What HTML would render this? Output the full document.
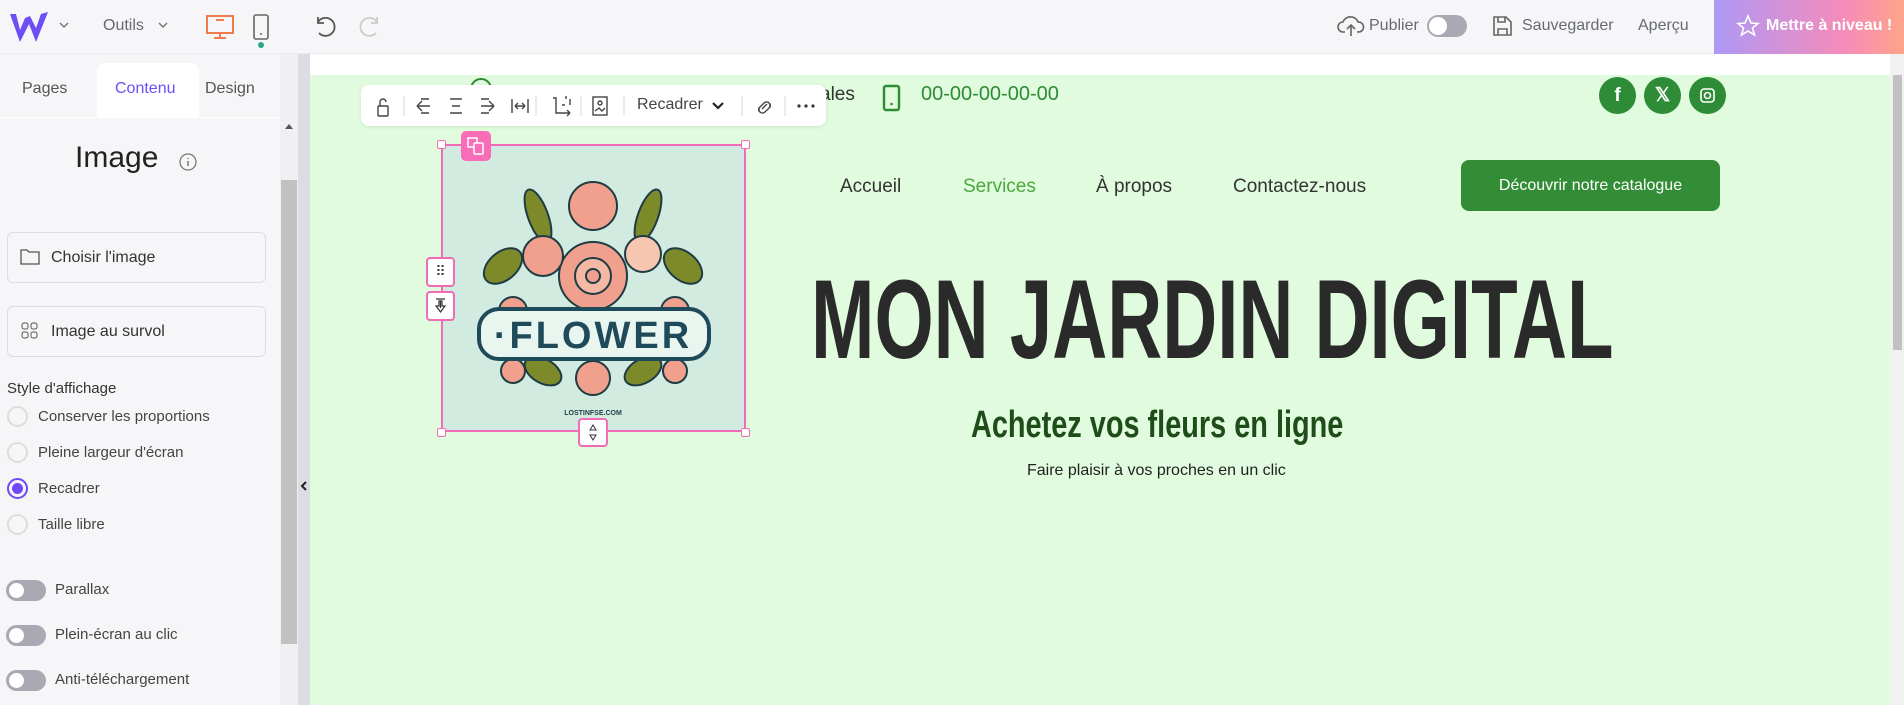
<!DOCTYPE html>
<html><head><meta charset="utf-8"><style>
*{box-sizing:border-box;margin:0;padding:0}
body{width:1904px;height:705px;overflow:hidden;font-family:"Liberation Sans",sans-serif;background:#f6f6f8;position:relative;color:#333}
.a{position:absolute}
.top{left:0;top:0;width:1904px;height:54px;background:#f6f6f8;border-bottom:1px solid #ececf0}
.t{font-size:16px;color:#666a73}
.panel{left:0;top:54px;width:280px;height:651px;background:#f6f6f8}
.btn{left:7px;width:259px;height:51px;border:1px solid #dcdce2;border-radius:6px;font-size:16px;color:#333;padding-left:43px;line-height:49px}
.radio{left:7px;width:21px;height:21px;border-radius:50%;border:2px solid #ddd;background:#f6f6f8}
.rl{left:38px;font-size:15px;color:#444}
.tg{left:6px;width:40px;height:21px;border-radius:11px;background:#a9a8b3}
.tg:after{content:"";position:absolute;left:3px;top:3px;width:15px;height:15px;border-radius:50%;background:#fff}
.tl{left:55px;font-size:15px;color:#444}
.nav{font-size:19px;color:#333;top:175px}
</style></head><body>
<div class="a top"></div>
<svg class="a" style="left:8px;top:10px" width="42" height="34" viewBox="0 0 42 34"><path d="M2 4 L12 32 L21 14 L28 32 L40 2 L33 4 L28 18 L22 6 L17 8 L12 20 L8 4Z" fill="#6c4df6"/></svg>
<svg class="a" style="left:58px;top:20px" width="12" height="10"><path d="M2 3l4 4 4-4" stroke="#777" fill="none" stroke-width="1.5"/></svg>
<div class="a t" style="left:103px;top:17px">Outils</div>
<svg class="a" style="left:157px;top:20px" width="12" height="10"><path d="M2 3l4 4 4-4" stroke="#777" fill="none" stroke-width="1.5"/></svg>
<svg class="a" style="left:205px;top:14px" width="30" height="26"><rect x="2" y="2" width="26" height="17" fill="none" stroke="#f07c4b" stroke-width="2"/><path d="M11 6h8M15 19v5M9 24h12" stroke="#f07c4b" stroke-width="2"/></svg>
<svg class="a" style="left:252px;top:13px" width="18" height="28"><rect x="2" y="2" width="14" height="24" rx="2" fill="none" stroke="#666" stroke-width="1.6"/><circle cx="9" cy="21" r="1" fill="#666"/></svg>
<div class="a" style="left:258px;top:42px;width:6px;height:6px;border-radius:50%;background:#2aa58a"></div>
<svg class="a" style="left:312px;top:14px" width="26" height="26"><path d="M6 8a9 9 0 1 1 1 11" stroke="#555" fill="none" stroke-width="1.8"/><path d="M6 3v6h6" stroke="#555" fill="none" stroke-width="1.8"/></svg>
<svg class="a" style="left:357px;top:14px" width="26" height="26"><path d="M20 8a9 9 0 1 0 -1 11" stroke="#ccc" fill="none" stroke-width="1.8"/><path d="M20 3v6h-6" stroke="#ccc" fill="none" stroke-width="1.8"/></svg>
<svg class="a" style="left:1337px;top:14px" width="28" height="24"><path d="M8 18H6a5 5 0 0 1 0-10 8 8 0 0 1 15 0 5 5 0 0 1 1 10h-2M14 22V11M10 15l4-4 4 4" stroke="#666" fill="none" stroke-width="1.6"/></svg>
<div class="a t" style="left:1369px;top:17px">Publier</div>
<div class="a" style="left:1427px;top:15px;width:40px;height:22px;border-radius:11px;background:#a9a8b3"><div class="a" style="left:2px;top:2px;width:18px;height:18px;border-radius:50%;background:#fff"></div></div>
<svg class="a" style="left:1491px;top:14px" width="22" height="24"><path d="M3 3h12l5 5v13H3Z" stroke="#666" fill="none" stroke-width="1.6"/><path d="M7 3v5h7V3M7 21v-6h9v6" stroke="#666" fill="none" stroke-width="1.6"/></svg>
<div class="a t" style="left:1522px;top:17px">Sauvegarder</div>
<div class="a t" style="left:1638px;top:17px">Aperçu</div>
<div class="a" style="left:1714px;top:0;width:190px;height:54px;background:linear-gradient(90deg,#ad98f6,#f68cb8 70%,#fea488)"></div>
<svg class="a" style="left:1736px;top:14px" width="24" height="24"><path d="M12 2l3 7 7 .5-5.5 4.5 2 7L12 17l-6.5 4 2-7L2 9.5 9 9Z" stroke="#fff" fill="none" stroke-width="1.6"/></svg>
<div class="a" style="left:1766px;top:17px;font-size:16px;font-weight:bold;color:#fff">Mettre à niveau !</div>

<div class="a panel"></div>
<div class="a" style="left:97px;top:63px;width:102px;height:55px;background:#fff;border-radius:8px 8px 0 0"></div>
<div class="a t" style="left:22px;top:80px;font-size:16px;color:#555">Pages</div>
<div class="a" style="left:115px;top:80px;font-size:16px;color:#6c4df6">Contenu</div>
<div class="a t" style="left:205px;top:80px;font-size:16px;color:#555">Design</div>
<div class="a" style="left:0;top:117px;width:280px;height:1px;background:#fff"></div>
<div class="a" style="left:75px;top:141px;font-size:30px;color:#222">Image</div>
<svg class="a" style="left:177px;top:151px" width="22" height="22"><circle cx="11" cy="11" r="8" stroke="#777" fill="none" stroke-width="1.3"/><path d="M11 10v5M11 7v1" stroke="#777" stroke-width="1.5"/></svg>
<div class="a btn" style="top:232px">Choisir l'image</div>
<svg class="a" style="left:20px;top:248px" width="20" height="18"><path d="M1 2h6l2 2h10v12H1Z" stroke="#555" fill="none" stroke-width="1.3"/></svg>
<div class="a btn" style="top:306px">Image au survol</div>
<svg class="a" style="left:21px;top:322px" width="18" height="18"><rect x="1" y="1" width="6" height="6" rx="2" stroke="#555" fill="none"/><rect x="10" y="1" width="6" height="6" rx="2" stroke="#555" fill="none"/><rect x="1" y="10" width="6" height="6" rx="2" stroke="#555" fill="none"/><rect x="10" y="10" width="6" height="6" rx="2" stroke="#555" fill="none"/></svg>
<div class="a" style="left:7px;top:380px;font-size:15px;color:#333">Style d'affichage</div>
<div class="a radio" style="top:406px"></div><div class="a rl" style="top:408px">Conserver les proportions</div>
<div class="a radio" style="top:442px"></div><div class="a rl" style="top:444px">Pleine largeur d'écran</div>
<div class="a radio" style="top:478px;border-color:#7048f5;border-width:2px"><div class="a" style="left:3px;top:3px;width:11px;height:11px;border-radius:50%;background:#7048f5"></div></div><div class="a rl" style="top:480px">Recadrer</div>
<div class="a radio" style="top:514px"></div><div class="a rl" style="top:516px">Taille libre</div>
<div class="a tg" style="top:580px"></div><div class="a tl" style="top:581px">Parallax</div>
<div class="a tg" style="top:625px"></div><div class="a tl" style="top:626px">Plein-écran au clic</div>
<div class="a tg" style="top:670px"></div><div class="a tl" style="top:671px">Anti-téléchargement</div>
<div class="a" style="left:280px;top:54px;width:18px;height:651px;background:#f0f0f2"></div>
<div class="a" style="left:281px;top:180px;width:16px;height:464px;background:#c1c1c1"></div>
<svg class="a" style="left:284px;top:122px" width="10" height="8"><path d="M1 7l4-5 4 5Z" fill="#555"/></svg>
<div class="a" style="left:298px;top:54px;width:12px;height:651px;background:#dcdce2"></div>
<svg class="a" style="left:300px;top:480px" width="8" height="12"><path d="M6 2L2 6l4 4" stroke="#222" fill="none" stroke-width="2"/></svg>

<div class="a" style="left:310px;top:54px;width:1594px;height:21px;background:#fff"></div>
<div class="a" style="left:310px;top:75px;width:1580px;height:630px;background:#e0fbdd"></div>
<div class="a" style="left:1890px;top:54px;width:14px;height:651px;background:#f1f1f1"></div>
<div class="a" style="left:1893px;top:75px;width:9px;height:275px;background:#c1c1c1"></div>

<div class="a" style="left:470px;top:78px;width:22px;height:22px;border-radius:50%;border:2px solid #2e8b36"></div>
<div class="a" style="left:820px;top:84px;font-size:19px;color:#333">ales</div>
<svg class="a" style="left:882px;top:84px" width="20" height="28"><rect x="2" y="2" width="15" height="24" rx="2" stroke="#2e8b36" fill="none" stroke-width="2.4"/><circle cx="9.5" cy="20" r="1.3" fill="#2e8b36"/></svg>
<div class="a" style="left:921px;top:83px;font-size:20px;color:#2e8b36">00-00-00-00-00</div>
<div class="a" style="left:1599px;top:77px;width:37px;height:37px;border-radius:50%;background:#2e8b36;color:#fff;font-weight:bold;font-size:19px;text-align:center;line-height:37px">f</div>
<div class="a" style="left:1644px;top:77px;width:37px;height:37px;border-radius:50%;background:#2e8b36;color:#fff;font-weight:bold;font-size:19px;text-align:center;line-height:37px">𝕏</div>
<div class="a" style="left:1689px;top:77px;width:37px;height:37px;border-radius:50%;background:#2e8b36"><svg width="37" height="37"><rect x="12" y="12" width="13" height="13" rx="3" stroke="#fff" fill="none" stroke-width="1.6"/><circle cx="18.5" cy="18.5" r="3" stroke="#fff" fill="none" stroke-width="1.6"/></svg></div>

<div class="a nav" style="left:840px;top:176px">Accueil</div>
<div class="a nav" style="left:963px;top:176px;color:#4aa83c">Services</div>
<div class="a nav" style="left:1096px;top:176px">À propos</div>
<div class="a nav" style="left:1233px;top:176px">Contactez-nous</div>
<div class="a" style="left:1461px;top:160px;width:259px;height:51px;background:#338d37;border-radius:8px;color:#fff;font-size:16px;text-align:center;line-height:51px">Découvrir notre catalogue</div>

<div class="a" style="left:811px;top:265px;font-weight:bold;font-size:112px;line-height:110px;color:#2a2a2a;white-space:nowrap;transform:scaleX(0.68);transform-origin:left">MON JARDIN DIGITAL</div>
<div class="a" style="left:971px;top:404px;font-weight:bold;font-size:38px;color:#1f4d1a;white-space:nowrap;transform:scaleX(0.76);transform-origin:left">Achetez vos fleurs en ligne</div>
<div class="a" style="left:1027px;top:462px;font-size:16px;color:#222">Faire plaisir à vos proches en un clic</div>

<!-- image -->
<div class="a" style="left:441px;top:144px;width:305px;height:288px;background:#d2ebe0;border:2px solid #f06cb7">
<svg width="301" height="284" viewBox="0 0 301 284">
<g stroke="#1f3b44" stroke-width="2">
<ellipse cx="60" cy="120" rx="22" ry="14" fill="#7d8a2a" transform="rotate(-40 60 120)"/>
<ellipse cx="240" cy="120" rx="22" ry="14" fill="#7d8a2a" transform="rotate(40 240 120)"/>
<ellipse cx="95" cy="70" rx="10" ry="28" fill="#7d8a2a" transform="rotate(-20 95 70)"/>
<ellipse cx="205" cy="70" rx="10" ry="28" fill="#7d8a2a" transform="rotate(20 205 70)"/>
<circle cx="150" cy="60" r="24" fill="#f0a08c"/>
<circle cx="150" cy="130" r="34" fill="#f0a08c"/><circle cx="150" cy="130" r="18" fill="#f5b8a5"/><circle cx="150" cy="130" r="7" fill="#f0a08c"/>
<circle cx="100" cy="110" r="20" fill="#f0a08c"/><circle cx="200" cy="108" r="18" fill="#f7c6b0"/>
<circle cx="70" cy="165" r="14" fill="#f0a08c"/><circle cx="232" cy="165" r="14" fill="#f0a08c"/>
<ellipse cx="100" cy="225" rx="20" ry="12" fill="#7d8a2a" transform="rotate(30 100 225)"/>
<ellipse cx="200" cy="225" rx="20" ry="12" fill="#7d8a2a" transform="rotate(-30 200 225)"/>
<circle cx="150" cy="232" r="17" fill="#f0a08c"/>
<circle cx="70" cy="225" r="12" fill="#f0a08c"/><circle cx="232" cy="225" r="12" fill="#f0a08c"/>
</g>
<rect x="36" y="163" width="230" height="50" rx="20" fill="#e9f5ef" stroke="#1f4a5a" stroke-width="4"/>
<text x="150" y="202" text-anchor="middle" font-family="Liberation Sans" font-weight="bold" font-size="38" fill="#1f4a5a" letter-spacing="3">·FLOWER</text>
<text x="150" y="269" text-anchor="middle" font-family="Liberation Sans" font-weight="bold" font-size="7" fill="#1f3b44">LOSTINFSE.COM</text>
</svg></div>
<div class="a" style="left:437px;top:140px;width:9px;height:9px;background:#fff;border:1.5px solid #f06cb7;border-radius:2px"></div>
<div class="a" style="left:741px;top:140px;width:9px;height:9px;background:#fff;border:1.5px solid #f06cb7;border-radius:2px"></div>
<div class="a" style="left:437px;top:428px;width:9px;height:9px;background:#fff;border:1.5px solid #f06cb7;border-radius:2px"></div>
<div class="a" style="left:741px;top:428px;width:9px;height:9px;background:#fff;border:1.5px solid #f06cb7;border-radius:2px"></div>
<div class="a" style="left:461px;top:131px;width:30px;height:30px;background:#f86cb8;border-radius:5px"><svg width="30" height="30"><rect x="7" y="7" width="9" height="9" fill="none" stroke="#fff" stroke-width="1.5"/><rect x="13" y="12" width="9" height="11" rx="1" fill="#f86cb8" stroke="#fff" stroke-width="1.5"/></svg></div>
<div class="a" style="left:426px;top:257px;width:29px;height:30px;background:#fff;border:2px solid #f06cb7;border-radius:4px;font-size:14px;text-align:center;line-height:24px;color:#333">⠿</div>
<div class="a" style="left:426px;top:291px;width:29px;height:30px;background:#fff;border:2px solid #f06cb7;border-radius:4px"><svg width="25" height="26"><path d="M8 6h9M12.5 8v7M8 13h3V8h3v5h3l-4.5 6Z" stroke="#333" fill="none" stroke-width="1.2"/></svg></div>
<div class="a" style="left:578px;top:418px;width:30px;height:29px;background:#fff;border:2px solid #f06cb7;border-radius:4px"><svg width="26" height="25"><path d="M13 5l3 5h-6ZM13 20l3-5h-6Z" stroke="#333" fill="none" stroke-width="1"/></svg></div>

<!-- toolbar -->
<div class="a" style="left:361px;top:85px;width:465px;height:41px;background:#fff;border-radius:8px;box-shadow:0 1px 4px rgba(0,0,0,.08)"></div>
<svg class="a" style="left:361px;top:85px" width="465" height="41" stroke="#444" fill="none" stroke-width="1.4">
<rect x="17" y="21" width="10" height="10" rx="1"/><path d="M19 21v-4a3 3 0 0 1 6 0"/>
<path d="M43 11v20M175 11v20M220 11v20M263 11v20M381 11v20M424 11v20" stroke="#e4e4e8"/>
<path d="M56 21h13M56 21l5-5M56 21l5 5M60 14h8M60 28h8"/>
<path d="M89 14h12M91 21h8M89 28h12"/>
<path d="M133 21h-13M133 21l-5-5M133 21l-5 5M120 14h8M120 28h8"/>
<path d="M151 14v14M167 14v14M154 21h10M154 21l3-3M154 21l3 3M164 21l-3-3M164 21l-3 3"/>
<path d="M192 13h3v15h14M209 28l-3-3M209 28l-3 3M205 11v3M209 14v6M201 20h3"/>
<rect x="232" y="12" width="14" height="18"/><circle cx="239" cy="18" r="2"/><path d="M234 26l4-3 3 3 3-3"/>
<path d="M401 24l5-5M399 27a3 3 0 0 1 0-5l4-4a3 3 0 0 1 5 5M408 18a3 3 0 0 1 0 5l-4 4a3 3 0 0 1-5-5"/>
<circle cx="438" cy="21" r="1.6" fill="#333" stroke="none"/><circle cx="445" cy="21" r="1.6" fill="#333" stroke="none"/><circle cx="452" cy="21" r="1.6" fill="#333" stroke="none"/>
<path d="M352 18l5 5 5-5" stroke="#222" stroke-width="2.2"/>
</svg>
<div class="a" style="left:637px;top:96px;font-size:16px;color:#444">Recadrer</div>
</body></html>
